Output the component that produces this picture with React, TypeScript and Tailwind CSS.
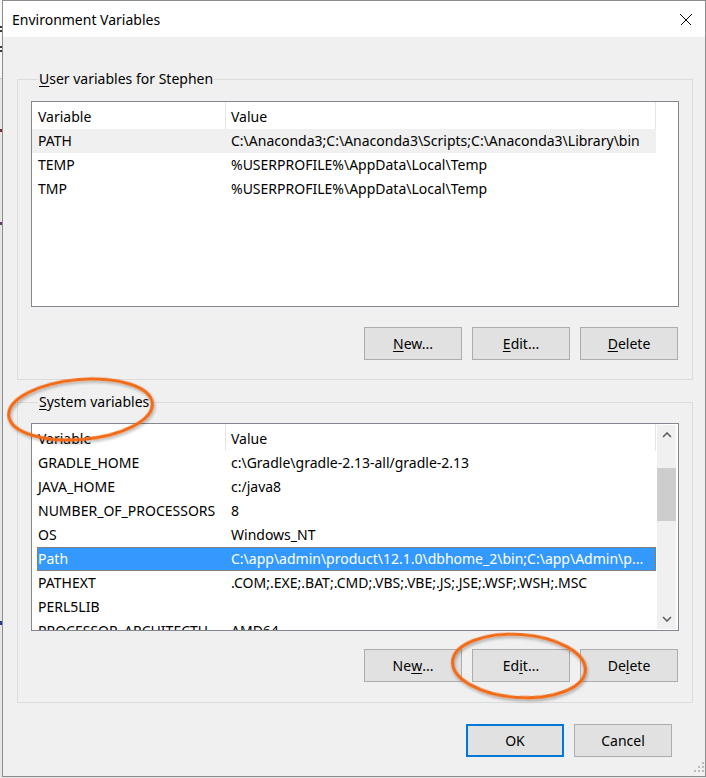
import clsx from "clsx";

type RowKind = "plain" | "inactive" | "active";

interface VarRow {
  name: string;
  value: string;
  kind?: RowKind;
}

const userVars: VarRow[] = [
  { name: "PATH", value: "C:\\Anaconda3;C:\\Anaconda3\\Scripts;C:\\Anaconda3\\Library\\bin", kind: "inactive" },
  { name: "TEMP", value: "%USERPROFILE%\\AppData\\Local\\Temp" },
  { name: "TMP", value: "%USERPROFILE%\\AppData\\Local\\Temp" },
];

const systemVars: VarRow[] = [
  { name: "GRADLE_HOME", value: "c:\\Gradle\\gradle-2.13-all/gradle-2.13" },
  { name: "JAVA_HOME", value: "c:/java8" },
  { name: "NUMBER_OF_PROCESSORS", value: "8" },
  { name: "OS", value: "Windows_NT" },
  { name: "Path", value: "C:\\app\\admin\\product\\12.1.0\\dbhome_2\\bin;C:\\app\\Admin\\p...", kind: "active" },
  { name: "PATHEXT", value: ".COM;.EXE;.BAT;.CMD;.VBS;.VBE;.JS;.JSE;.WSF;.WSH;.MSC" },
  { name: "PERL5LIB", value: "" },
  { name: "PROCESSOR_ARCHITECTU...", value: "AMD64" },
];

function Mn({ children }: { children: string }) {
  return <span className="underline decoration-1 underline-offset-[2px]">{children}</span>;
}

function Button({ children, primary }: { children: React.ReactNode; primary?: boolean }) {
  return (
    <button
      type="button"
      className={clsx(
        "flex h-[33px] w-[98px] items-center justify-center bg-[#e1e1e1] leading-[20px] text-black",
        primary ? "border-2 border-[#0078d7]" : "border border-[#adadad]"
      )}
    >
      {children}
    </button>
  );
}

function Header() {
  return (
    <div className="flex h-[27px] w-[624px] shrink-0 leading-[20px]">
      <div className="h-full w-[194px] shrink-0 border-r border-[#e5e5e5] pl-[6px] pt-[5px]">Variable</div>
      <div className="h-full w-[430px] shrink-0 border-r border-[#e5e5e5] pl-[5px] pt-[5px]">Value</div>
    </div>
  );
}

function Row({ row }: { row: VarRow }) {
  if (row.kind === "active") {
    return (
      <div className="flex h-[24px] w-[624px] shrink-0">
        <div className="ml-[5px] flex flex-1 border border-dotted border-[#cc6600] bg-[#3399ff] pt-[1px] leading-[20px] text-white">
          <div className="w-[188px] shrink-0 overflow-hidden whitespace-nowrap">{row.name}</div>
          <div className="flex-1 overflow-hidden whitespace-nowrap pl-[5px]">{row.value}</div>
        </div>
      </div>
    );
  }
  return (
    <div
      className={clsx(
        "flex h-[24px] w-[624px] shrink-0 pt-[2px] leading-[20px]",
        row.kind === "inactive" && "bg-[#f0f0f0]"
      )}
    >
      <div className="w-[194px] shrink-0 overflow-hidden whitespace-nowrap pl-[6px]">{row.name}</div>
      <div className="w-[430px] shrink-0 overflow-hidden whitespace-nowrap pl-[5px]">{row.value}</div>
    </div>
  );
}

function Chevron({ down }: { down?: boolean }) {
  return (
    <svg width="10" height="6" viewBox="0 0 10 6">
      <polyline
        points={down ? "1,1 5,5 9,1" : "1,5 5,1 9,5"}
        fill="none"
        stroke="#606060"
        strokeWidth="1.6"
      />
    </svg>
  );
}

function ScrollBar() {
  return (
    <div className="flex w-[22px] shrink-0 py-[1px] pl-[1px] pr-[2px]">
      <div className="flex flex-1 flex-col bg-[#f0f0f0]">
        <div className="flex h-[20px] items-center justify-center">
          <Chevron />
        </div>
        <div className="flex-1">
          <div className="mt-[23px] h-[53px] bg-[#cdcdcd]" />
        </div>
        <div className="flex h-[20px] items-center justify-center">
          <Chevron down />
        </div>
      </div>
    </div>
  );
}

function Legend({ children }: { children: React.ReactNode }) {
  return <legend className="ml-[7px] px-[1px] leading-[20px]">{children}</legend>;
}

function CloseIcon() {
  return (
    <svg width="12" height="12" viewBox="0 0 12 12" shapeRendering="crispEdges">
      <path d="M0.5 0.5 L11.5 11.5 M11.5 0.5 L0.5 11.5" stroke="#000" strokeWidth="1" />
    </svg>
  );
}

function SizeGrip() {
  const dots: [number, number][] = [
    [8, 2],
    [4, 6],
    [8, 6],
    [0, 10],
    [4, 10],
    [8, 10],
  ];
  return (
    <svg className="absolute bottom-[4px] right-0" width="12" height="12" viewBox="0 0 12 12">
      {dots.map(([x, y]) => (
        <rect key={`${x}-${y}`} x={x + 1} y={y} width="2" height="2" fill="#bcbcbc" />
      ))}
    </svg>
  );
}

function BackgroundStrip() {
  return (
    <div className="flex w-[2px] shrink-0 flex-col bg-[#e6e6e6]">
      <div className="h-[26px] bg-[#f7f7f7]" />
      <div className="h-[2px] bg-[#3a3a3a]" />
      <div className="h-[2px] bg-[#f7f7f7]" />
      <div className="h-[2px] bg-[#3a3a3a]" />
      <div className="h-[14px] bg-[#f7f7f7]" />
      <div className="h-[2px] bg-[#3a3a3a]" />
      <div className="h-[2px] bg-[#f7f7f7]" />
      <div className="h-[2px] bg-[#3a3a3a]" />
      <div className="h-[26px] bg-[#f7f7f7]" />
      <div className="h-[1px] bg-[#c8c8c8]" />
      <div className="h-[50px]" />
      <div className="h-[3px] bg-[#7a3030]" />
      <div className="h-[90px]" />
      <div className="h-[3px] bg-[#6b3b6b]" />
      <div className="h-[396px]" />
      <div className="h-[4px] bg-[#1f3f8f]" />
    </div>
  );
}

function Annotations() {
  return (
    <svg className="pointer-events-none absolute left-0 top-0" width="706" height="778">
      <defs>
        <filter id="ring-shadow" x="-20%" y="-30%" width="140%" height="160%">
          <feDropShadow dx="1" dy="2" stdDeviation="1.6" floodColor="#000" floodOpacity="0.3" />
        </filter>
      </defs>
      <ellipse
        cx="80.5"
        cy="409.5"
        rx="72"
        ry="30"
        transform="rotate(-5 80.5 409.5)"
        fill="none"
        stroke="#f26a18"
        strokeWidth="3.2"
        filter="url(#ring-shadow)"
      />
      <ellipse
        cx="519"
        cy="666"
        rx="66.5"
        ry="31.5"
        transform="rotate(4 519 666)"
        fill="none"
        stroke="#f26a18"
        strokeWidth="3.2"
        filter="url(#ring-shadow)"
      />
    </svg>
  );
}

export default function App() {
  return (
    <div className="relative flex h-[778px] w-[706px] overflow-hidden bg-[#e6e6e6] font-['Noto_Sans',sans-serif] text-[14px] text-black">
      <BackgroundStrip />
      <div className="relative flex h-[777px] w-[704px] shrink-0 flex-col border border-[#8c8c8c] bg-[#f0f0f0]">
        {/* title bar */}
        <div className="flex h-[36px] shrink-0 items-center justify-between bg-white pl-[9px] pr-[13px] pt-px">
          <span className="leading-[20px]">Environment Variables</span>
          <CloseIcon />
        </div>

        {/* dialog body */}
        <div className="flex flex-1 flex-col pl-[14px] pr-[12px] pt-[32px]">
          <fieldset className="min-w-0 border border-[#dcdcdc] px-[13px] pb-[19px] pt-[12px]">
            <Legend>
              <Mn>U</Mn>ser variables for Stephen
            </Legend>
            <div className="flex h-[206px] flex-col overflow-hidden border border-[#828790] bg-white">
              <Header />
              {userVars.map((r) => (
                <Row key={r.name} row={r} />
              ))}
            </div>
            <div className="mt-[20px] flex justify-end gap-[10px] pr-[1px]">
              <Button>
                <Mn>N</Mn>ew...
              </Button>
              <Button>
                <Mn>E</Mn>dit...
              </Button>
              <Button>
                <Mn>D</Mn>elete
              </Button>
            </div>
          </fieldset>

          <fieldset className="mt-[12px] min-w-0 border border-[#dcdcdc] px-[13px] pb-[20px] pt-[11px]">
            <Legend>
              <Mn>S</Mn>ystem variables
            </Legend>
            <div className="flex h-[208px] overflow-hidden border border-[#828790] bg-white">
              <div className="flex w-[624px] shrink-0 flex-col overflow-hidden">
                <Header />
                {systemVars.map((r) => (
                  <Row key={r.name} row={r} />
                ))}
              </div>
              <ScrollBar />
            </div>
            <div className="mt-[18px] flex justify-end gap-[10px] pr-[1px]">
              <Button>
                Ne<Mn>w</Mn>...
              </Button>
              <Button>
                Ed<Mn>i</Mn>t...
              </Button>
              <Button>
                De<Mn>l</Mn>ete
              </Button>
            </div>
          </fieldset>

          <div className="mt-[21px] flex justify-end gap-[10px] pr-[21px]">
            <Button primary>OK</Button>
            <Button>Cancel</Button>
          </div>
        </div>
        <SizeGrip />
      </div>
      <Annotations />
    </div>
  );
}
